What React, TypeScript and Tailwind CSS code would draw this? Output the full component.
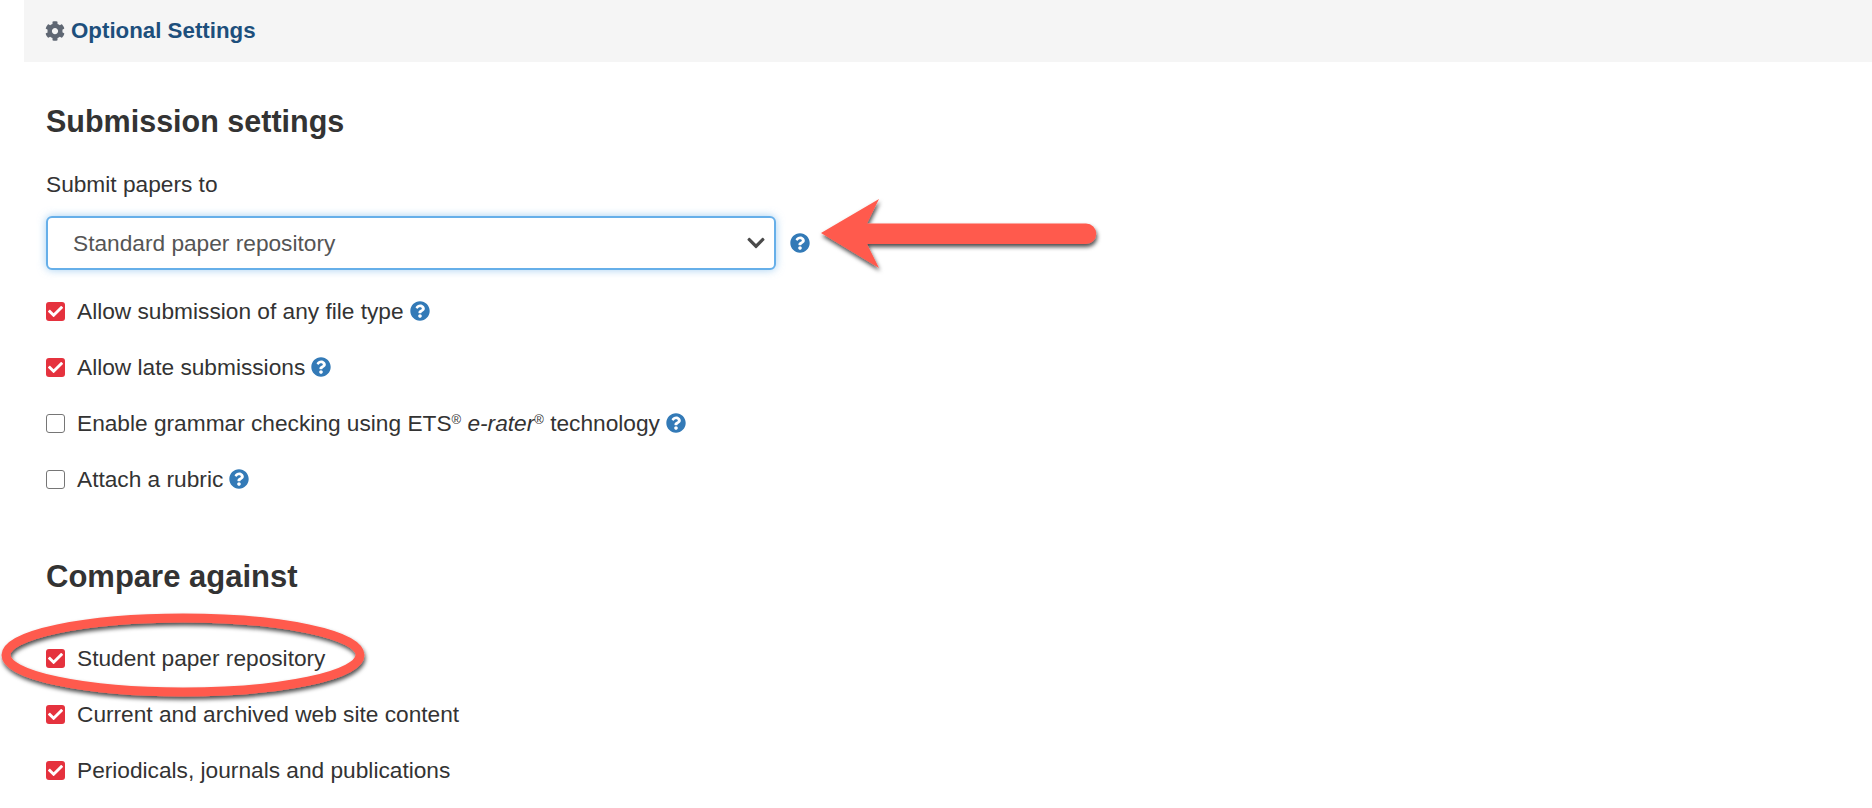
import { FaCheck, FaChevronDown, FaCog, FaQuestionCircle } from 'react-icons/fa'
import type { ReactNode } from 'react'

function Help() {
  return <FaQuestionCircle size={20} className="shrink-0 text-[#337ab7]" />
}

function Option({ checked, help, children }: { checked?: boolean; help?: boolean; children: ReactNode }) {
  return (
    <div className="flex h-[56px] items-center text-[22.7px] text-[#333]">
      <div
        className={
          checked
            ? 'flex h-[19px] w-[19px] shrink-0 items-center justify-center rounded-[3px] bg-[#e5323e] text-white'
            : 'h-[19px] w-[19px] shrink-0 rounded-[3px] border border-[#767676] bg-white'
        }
      >
        {checked && <FaCheck size={15} />}
      </div>
      <span className="ml-[12px] mr-[6px] whitespace-nowrap">{children}</span>
      {help && <Help />}
    </div>
  )
}

function Annotations() {
  return (
    <svg className="pointer-events-none absolute left-0 top-0" width="1872" height="808">
      <defs>
        <filter id="shadow" x="-10%" y="-30%" width="120%" height="170%">
          <feDropShadow dx="1" dy="3" stdDeviation="2" floodColor="#000" floodOpacity="0.7" />
        </filter>
      </defs>
      <path
        d="M821 233 L879 199 L867 223.5 L1086 223.5 A10.25 10.25 0 0 1 1086 244 L867 244 L879 268 Z"
        fill="#ff5a4d"
        filter="url(#shadow)"
      />
      <ellipse cx="183" cy="655" rx="177" ry="37" fill="none" stroke="#ff5a4d" strokeWidth="9" filter="url(#shadow)" />
    </svg>
  )
}

export default function App() {
  return (
    <div className="relative h-[808px] w-[1872px] overflow-hidden bg-white font-['Liberation_Sans',Arial,sans-serif]">
      <div className="ml-6 flex h-[62px] items-center bg-[#f5f5f5] pl-[21px]">
        <FaCog size={20} className="text-[#5f6773]" />
        <span className="ml-[6px] text-[22.3px] font-bold text-[#1d4f7c]">Optional Settings</span>
      </div>

      <div className="pl-[46px]">
        <h2 className="mt-[41px] text-[30.5px] font-bold leading-[36px] text-[#333]">Submission settings</h2>
        <div className="mt-[31px] text-[22.7px] leading-[28px] text-[#333]">Submit papers to</div>
        <div className="mt-[18px] flex items-center">
          <div className="flex h-[54px] w-[730px] items-center justify-between rounded-[6px] border-2 border-[#66afe9] bg-white pl-[25px] pr-[8px] text-[22.7px] text-[#555] shadow-[0_0_8px_rgba(102,175,233,0.6)]">
            <span>Standard paper repository</span>
            <FaChevronDown size={20} className="text-[#4a4a4a]" />
          </div>
          <div className="ml-[14px]">
            <Help />
          </div>
        </div>

        <div className="mt-[13px]">
          <Option checked help>Allow submission of any file type</Option>
          <Option checked help>Allow late submissions</Option>
          <Option help>
            Enable grammar checking using ETS<sup className="text-[13px]">®</sup> <em>e-rater</em>
            <sup className="text-[13px]">®</sup> technology
          </Option>
          <Option help>Attach a rubric</Option>
        </div>

        <h2 className="mt-[52px] text-[31px] font-bold leading-[36px] text-[#333]">Compare against</h2>
        <div className="mt-[35px]">
          <Option checked>Student paper repository</Option>
          <Option checked>Current and archived web site content</Option>
          <Option checked>Periodicals, journals and publications</Option>
        </div>
      </div>

      <Annotations />
    </div>
  )
}
